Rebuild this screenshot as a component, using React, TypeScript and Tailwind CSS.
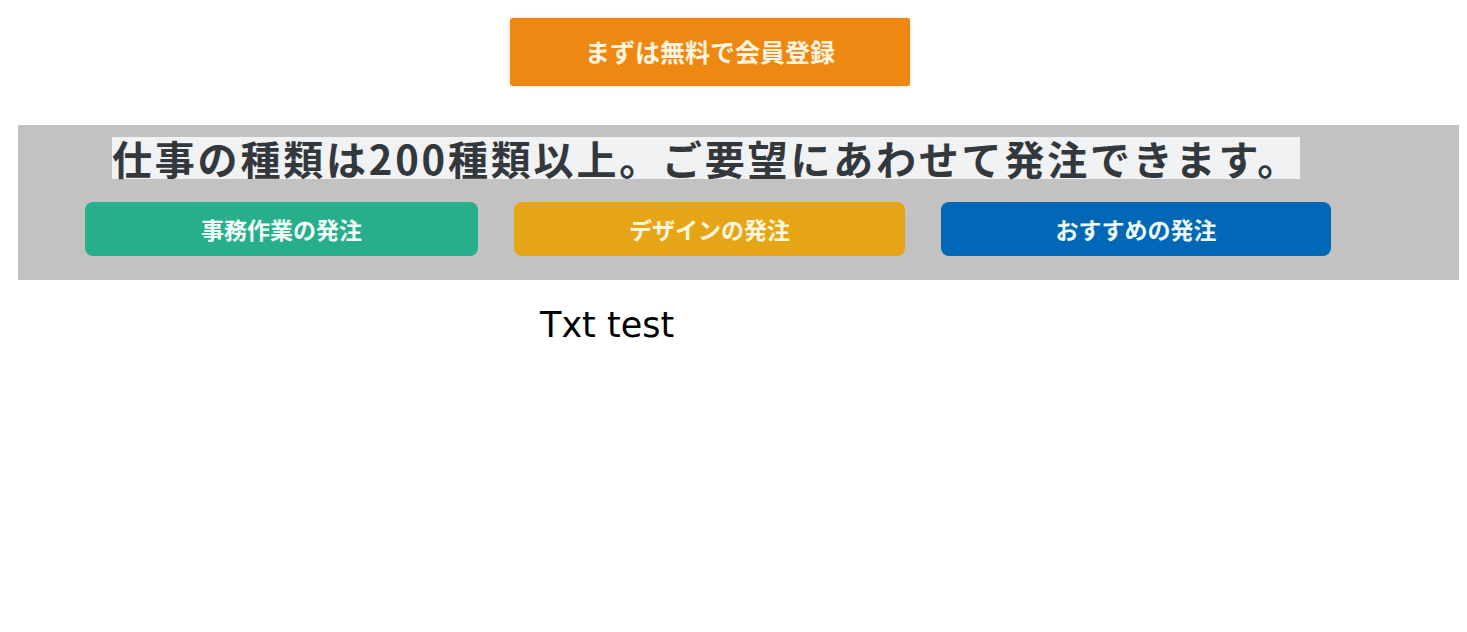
export default function App() {
  const jp = { fontFamily: '"Noto Sans CJK JP", "Noto Sans", sans-serif' };

  return (
    <div className="min-h-screen bg-white" style={jp}>
      {/* Signup button */}
      <div className="pt-[18px] pl-[510px]">
        <button className="flex h-[68px] w-[400px] items-center justify-center rounded-[3px] bg-[#ee8813] text-[25px] font-bold text-[#fff4de] shadow-[0_0_3px_rgba(238,136,19,0.35)]">
          まずは無料で会員登録
        </button>
      </div>

      {/* Categories band */}
      <section className="ml-[18px] mr-[8px] mt-[39px] h-[155px] bg-[#c2c2c2] pt-[12px]">
        <h2 className="pl-[94px] text-[40px] font-bold leading-[42px] tracking-[2.8px] text-[#33383d]">
          <span className="inline-block bg-[#f1f2f3] leading-[42px]">
            仕事の種類は200種類以上。ご要望にあわせて発注できます。
          </span>
        </h2>
        <div className="mt-[23px] flex gap-[36px] pl-[67px]">
          <button className="flex h-[54px] w-[393px] items-center justify-center rounded-[8px] bg-[#27ae8a] text-[23px] font-bold text-[#f2fff9]">
            事務作業の発注
          </button>
          <button className="flex h-[54px] w-[391px] items-center justify-center rounded-[8px] bg-[#e6a516] text-[23px] font-bold text-[#fff8de]">
            デザインの発注
          </button>
          <button className="flex h-[54px] w-[390px] items-center justify-center rounded-[8px] bg-[#0068b6] text-[23px] font-bold text-[#eefaff]">
            おすすめの発注
          </button>
        </div>
      </section>

      {/* Sample text */}
      <p
        className="pl-[540px] pt-[25px] text-[35px] leading-[40px] text-black"
        style={{ fontFamily: '"DejaVu Sans", sans-serif' }}
      >
        Txt test
      </p>
    </div>
  );
}
